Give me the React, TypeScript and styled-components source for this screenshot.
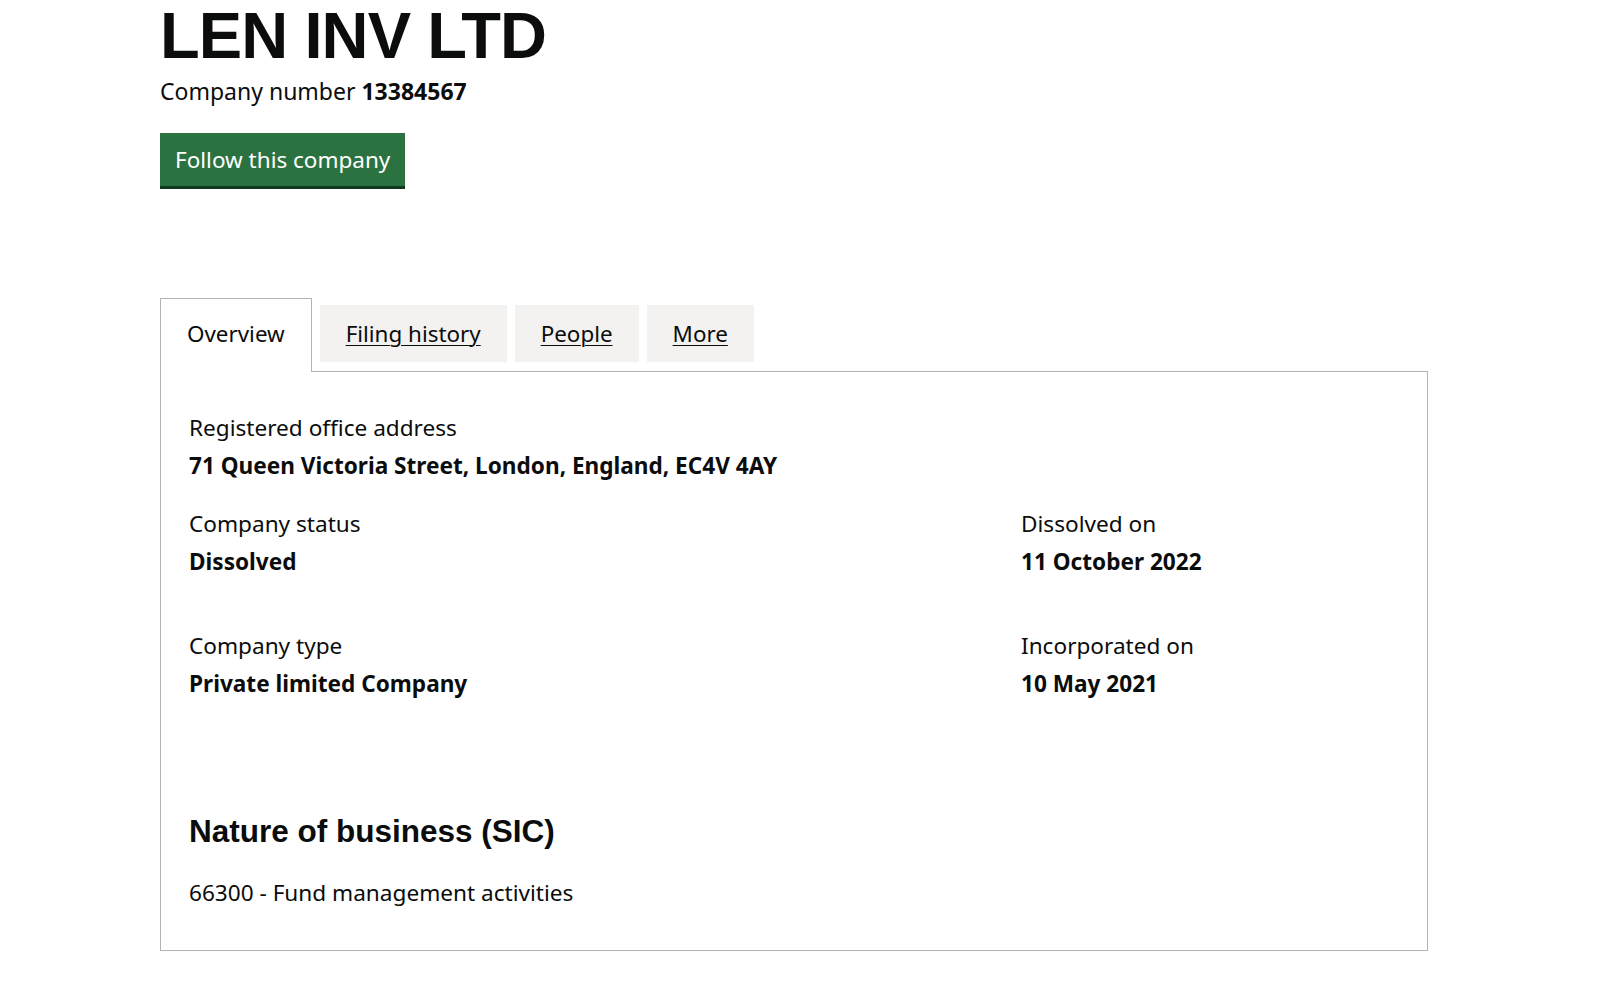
import React from 'react';
import styled, {createGlobalStyle} from 'styled-components';

const GlobalStyle = createGlobalStyle`
  html, body {
    margin: 0;
    padding: 0;
    background: #ffffff;
    color: #0b0c0c;
    font-family: "Noto Sans", "Liberation Sans", Arial, sans-serif;
  }
`;

type Detail = {label: string; value: string};

const leftColumn: Detail[] = [
    {label: 'Company status', value: 'Dissolved'},
    {label: 'Company type', value: 'Private limited Company'},
];

const rightColumn: Detail[] = [
    {label: 'Dissolved on', value: '11 October 2022'},
    {label: 'Incorporated on', value: '10 May 2021'},
];

const tabs = ['Overview', 'Filing history', 'People', 'More'];

/**
 * Company overview page
 */
export default function App() {
    return (
        <>
            <GlobalStyle />
            <Page>
                <Title>LEN INV LTD</Title>
                <CompanyNumber>
                    Company number <strong>13384567</strong>
                </CompanyNumber>
                <FollowButton type='button'>Follow this company</FollowButton>

                <TabList>
                    {tabs.map((tab, i) => (
                        <Tab key={tab} $selected={i === 0}>
                            <TabLink href='#' $selected={i === 0}>{tab}</TabLink>
                        </Tab>
                    ))}
                </TabList>

                <Panel>
                    <Item>
                        <Label>Registered office address</Label>
                        <Value>71 Queen Victoria Street, London, England, EC4V 4AY</Value>
                    </Item>

                    <Columns>
                        <Column>
                            {leftColumn.map(d => (
                                <Item key={d.label}>
                                    <Label>{d.label}</Label>
                                    <Value>{d.value}</Value>
                                </Item>
                            ))}
                        </Column>
                        <Column>
                            {rightColumn.map(d => (
                                <Item key={d.label}>
                                    <Label>{d.label}</Label>
                                    <Value>{d.value}</Value>
                                </Item>
                            ))}
                        </Column>
                    </Columns>

                    <SectionHeading>Nature of business (SIC)</SectionHeading>
                    <SicText>66300 - Fund management activities</SicText>
                </Panel>
            </Page>
        </>
    );
}

const Page = styled.main`
  width: 1268px;
  margin-left: 160px;
  padding-bottom: 70px;
`;

const Title = styled.h1`
  margin: 3px 0 0;
  font-family: "Liberation Sans", Arial, sans-serif;
  font-weight: 700;
  font-size: 65px;
  line-height: 1;
  letter-spacing: -0.9px;
`;

const CompanyNumber = styled.p`
  margin: 7px 0 0;
  font-size: 23px;
  line-height: 32px;

  strong {
    font-weight: 700;
  }
`;

const FollowButton = styled.button`
  display: block;
  margin-top: 26px;
  height: 53px;
  padding: 0 15px;
  border: 0;
  border-radius: 0;
  background: #2c7241;
  box-shadow: 0 3px 0 #0e3a1e;
  color: #ffffff;
  font-family: inherit;
  font-size: 22.5px;
  cursor: pointer;
`;

const TabList = styled.ul`
  list-style: none;
  margin: 112px 0 0;
  padding: 0;
  display: flex;
  align-items: flex-start;
  gap: 8px;
  position: relative;
  z-index: 1;
  height: 73px;
`;

const Tab = styled.li<{$selected?: boolean}>`
  box-sizing: border-box;
  display: flex;
  align-items: center;
  padding: 0 26px;
  ${p => p.$selected ? `
    height: 74px;
    padding-bottom: 3px;
    background: #ffffff;
    border: 1px solid #b1b4b6;
    border-bottom: 0;
  ` : `
    margin-top: 7px;
    height: 57px;
    background: #f3f2f1;
  `}
`;

const TabLink = styled.a<{$selected?: boolean}>`
  color: #0b0c0c;
  font-size: 22.4px;
  line-height: 32px;
  text-decoration: ${p => p.$selected ? 'none' : 'underline'};
  text-underline-offset: 3px;
  text-decoration-thickness: 1px;
`;

const Panel = styled.section`
  box-sizing: border-box;
  border: 1px solid #b1b4b6;
  padding: 40px 28px 41px;
`;

const Columns = styled.div`
  display: grid;
  grid-template-columns: 832px 1fr;
  margin-top: 26px;
`;

const Column = styled.div`
  display: flex;
  flex-direction: column;
  gap: 52px;
`;

const Item = styled.div`
  display: flex;
  flex-direction: column;
  gap: 6px;
`;

const Label = styled.div`
  font-size: 22.6px;
  line-height: 32px;
`;

const Value = styled.div`
  font-size: 22.6px;
  line-height: 32px;
  font-weight: 700;
`;

const SectionHeading = styled.h2`
  margin: 110px 0 0;
  font-family: "Liberation Sans", Arial, sans-serif;
  font-weight: 700;
  font-size: 31.5px;
  line-height: 42px;
`;

const SicText = styled.p`
  margin: 25px 0 0;
  font-size: 22.6px;
  line-height: 32px;
`;
